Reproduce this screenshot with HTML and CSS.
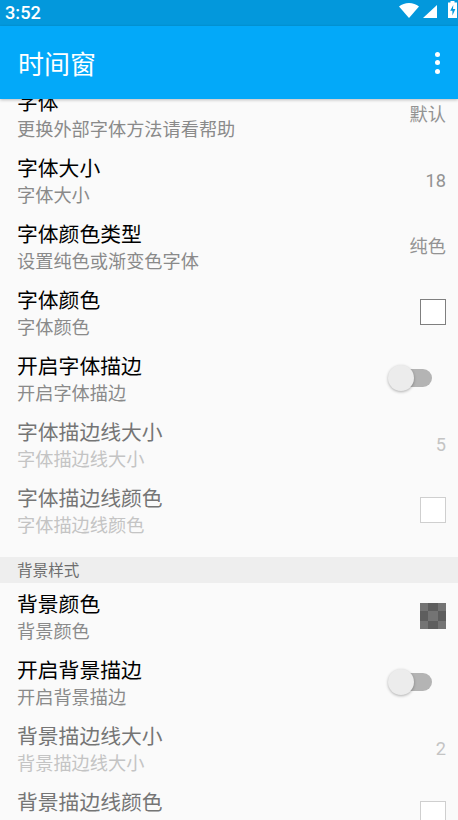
FILE: index.html
```html
<!DOCTYPE html>
<html lang="zh-CN">
<head>
<meta charset="utf-8">
<title>时间窗</title>
<link rel="stylesheet" href="styles.css">
</head>
<body>
<div class="app">
  <div class="statusbar">
    <span class="time">3:52</span>
    <div class="status-icons">
      <svg class="ic-wifi" viewBox="0 0 20 15"><path d="M0 3.500C2.800 1.200 6.200 0 10 0s7.200 1.200 10 3.500L10 15z"/></svg>
      <svg class="ic-signal" viewBox="0 0 14 13"><path d="M14 0v13H0z"/></svg>
      <svg class="ic-battery" viewBox="0 0 9 17"><path fill-rule="evenodd" d="M2.500 0h4v1.500H9V17H0V1.500h2.500zM5.300 4 2.200 9.800h2.200V14.500l3-6.400H5z"/></svg>
    </div>
  </div>
  <header class="toolbar">
    <h1 class="title">时间窗</h1>
    <div class="more"><i></i><i></i><i></i></div>
  </header>
  <main class="list">
    <div class="scroll">
      <div class="row"><div class="text"><div class="t">字体</div><div class="s">更换外部字体方法请看帮助</div></div><div class="val">默认</div></div>
      <div class="row"><div class="text"><div class="t">字体大小</div><div class="s">字体大小</div></div><div class="val">18</div></div>
      <div class="row"><div class="text"><div class="t">字体颜色类型</div><div class="s">设置纯色或渐变色字体</div></div><div class="val">纯色</div></div>
      <div class="row"><div class="text"><div class="t">字体颜色</div><div class="s">字体颜色</div></div><div class="swatch"></div></div>
      <div class="row"><div class="text"><div class="t">开启字体描边</div><div class="s">开启字体描边</div></div><div class="switch"><span class="thumb"></span></div></div>
      <div class="row off"><div class="text"><div class="t">字体描边线大小</div><div class="s">字体描边线大小</div></div><div class="val">5</div></div>
      <div class="row off"><div class="text"><div class="t">字体描边线颜色</div><div class="s">字体描边线颜色</div></div><div class="swatch"></div></div>
      <div class="section">背景样式</div>
      <div class="row"><div class="text"><div class="t">背景颜色</div><div class="s">背景颜色</div></div>
        <svg class="checker" viewBox="0 0 26 26"><rect width="26" height="26" fill="#747474"/><path fill="#5e5e5e" d="M8 0h10v8H8zM0 8h8v10H0zM18 8h8v10h-8zM8 18h10v8H8z"/></svg>
      </div>
      <div class="row"><div class="text"><div class="t">开启背景描边</div><div class="s">开启背景描边</div></div><div class="switch"><span class="thumb"></span></div></div>
      <div class="row off"><div class="text"><div class="t">背景描边线大小</div><div class="s">背景描边线大小</div></div><div class="val">2</div></div>
      <div class="row off"><div class="text"><div class="t">背景描边线颜色</div><div class="s">背景描边线颜色</div></div><div class="swatch"></div></div>
    </div>
  </main>
</div>
</body>
</html>
```
FILE: styles.css
```css
* { box-sizing: border-box; }
html, body { margin: 0; padding: 0; }
body { font-family: "Noto Sans CJK SC", Roboto, sans-serif; background: #fafafa; }
.app { width: 458px; height: 820px; overflow: hidden; display: flex; flex-direction: column; }
.statusbar { height: 26px; flex: none; background: #0398dc; color: #fff; display: flex; align-items: center; justify-content: space-between; padding: 0 1px 0 5px; }
.time { font-family: Roboto, sans-serif; font-size: 18.2px; font-weight: 500; line-height: 26px; }
.status-icons { display: flex; align-items: center; height: 26px; }
.status-icons svg { display: block; fill: #fff; }
.ic-wifi { width: 20px; height: 15px; margin-top: -5px; }
.ic-signal { width: 14px; height: 13px; margin-left: 4px; margin-top: -3px; }
.ic-battery { width: 9px; height: 17px; margin-left: 11px; margin-top: -7px; }
.toolbar { height: 73px; flex: none; background: #03a9f9; color: #fff; display: flex; align-items: center; justify-content: space-between; padding: 0 18px; box-shadow: 0 1px 3px rgba(0,0,0,.25); position: relative; z-index: 1; }
.title { margin: 0; font-size: 26px; font-weight: 400; line-height: 1; }
.more { display: flex; flex-direction: column; gap: 3.500px; }
.more i { display: block; width: 5px; height: 5px; border-radius: 50%; background: #fff; }
.list { flex: 1; min-height: 0; overflow: hidden; }
.scroll { margin-top: -18px; }
.row { height: 66px; display: flex; align-items: center; justify-content: space-between; padding: 0 12px 0 17px; }
.text { display: flex; flex-direction: column; margin-top: 1px; }
.t { font-size: 20.800px; line-height: 26px; color: #000; }
.s { font-size: 18.200px; line-height: 26px; color: #8a8a8a; margin-top: 1px; }
.val { font-family: Roboto, "Noto Sans CJK SC", sans-serif; font-size: 18.200px; color: #939393; line-height: 26px; margin-top: 2px; }
.swatch { width: 26px; height: 26px; background: #fff; border: 1.300px solid #7f7f7f; }
.checker { width: 26px; height: 26px; display: block; }
.switch { position: relative; width: 33px; height: 18px; border-radius: 9px; background: #b4b4b4; margin-right: 14px; }
.thumb { position: absolute; left: -11px; top: -4px; width: 26px; height: 26px; border-radius: 50%; background: #ececec; box-shadow: 0 1px 3px rgba(0,0,0,.3); }
.off .t { color: #757575; }
.off .s { color: #c4c4c4; }
.off .val { color: #c4c4c4; }
.off .swatch { border-color: #cfcfcf; }
.section { height: 26px; margin-top: 14px; background: #eeeeee; padding-left: 17px; font-size: 15.600px; line-height: 24px; color: #6e6e6e; }
```
